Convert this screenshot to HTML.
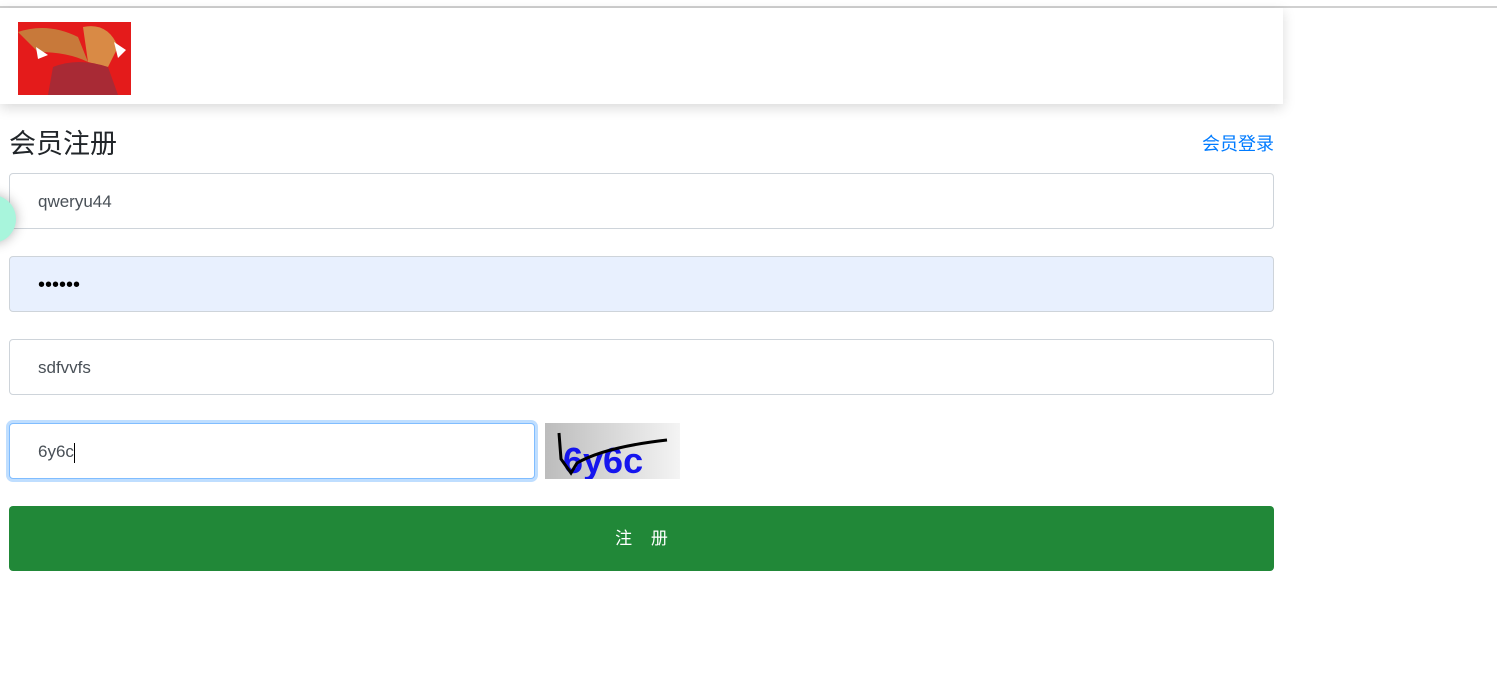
<!DOCTYPE html>
<html><head><meta charset="utf-8"><style>
body{margin:0;width:1497px;height:684px;background:#fff;font-family:"Liberation Sans","Noto Sans CJK SC",sans-serif;position:relative;overflow:hidden}
.topline{position:absolute;left:0;top:6px;width:1497px;height:2px;background:#d0d0d0}
.hdr{position:absolute;left:0;top:8px;width:1283px;height:96px;background:#fff;box-shadow:0 4px 12px rgba(0,0,0,.15)}
.logo{position:absolute;left:18px;top:22px;width:113px;height:73px;background:#e41b1b;overflow:hidden}
h2{position:absolute;left:9px;top:122px;margin:0;font-weight:400;font-size:27px;color:#212529}
.login{position:absolute;left:1202px;top:130px;font-size:18px;color:#007bff}
.in{position:absolute;left:9px;width:1263px;height:54px;border:1px solid #ced4da;border-radius:4px;box-sizing:content-box;background:#fff;font-size:17px;color:#495057;line-height:56px;text-indent:28px}
.btn{position:absolute;left:9px;top:506px;width:1265px;height:65px;background:#218838;border-radius:4px;color:#fff;font-size:17px;text-align:center;line-height:65px;word-spacing:14px}
.bubble{position:absolute;left:-32px;top:195px;width:48px;height:48px;border-radius:50%;background:#a8f5dc;box-shadow:0 0 12px rgba(0,0,0,.3)}
</style></head><body>
<div class="topline"></div>
<div class="hdr"></div>
<div class="logo"><svg width="113" height="73"><path d="M0 10 Q30 0 60 15 L70 40 Q50 30 20 30 Z" fill="#c8793a"/><path d="M65 5 Q90 0 100 25 L90 45 L70 40 Z" fill="#d98a45"/><path d="M35 45 Q60 35 90 45 L100 73 L30 73 Z" fill="#a82a35"/><path d="M18 25 l12 8 -10 4z M96 20 l12 8 -8 8z" fill="#fff"/></svg></div>
<h2>会员注册</h2>
<div class="login">会员登录</div>
<div class="in" style="top:173px">qweryu44</div>
<div class="in" style="top:256px;background:#e8f0fe;font-size:20px;color:#000;letter-spacing:0">••••••</div>
<div class="in" style="top:339px">sdfvvfs</div>
<div class="in" style="top:423px;width:524px;border-color:#80bdff;box-shadow:0 0 0 3px rgba(0,123,255,.25)">6y6c<span style="display:inline-block;width:1px;height:20px;background:#000;vertical-align:middle"></span></div>
<svg style="position:absolute;left:545px;top:423px" width="135" height="56"><defs><linearGradient id="g"><stop offset="0" stop-color="#bcbcbc"/><stop offset="1" stop-color="#f4f4f4"/></linearGradient></defs><rect width="135" height="56" fill="url(#g)"/><text x="18" y="50" font-family="Liberation Sans" font-weight="bold" font-size="36" fill="#1515ee">6y6c</text><path d="M14 10 L16 36 L26 50 L32 40 Q60 24 122 17" stroke="#000" stroke-width="3" fill="none"/></svg>
<div class="btn">注 册</div>
<div class="bubble"></div>
</body></html>
